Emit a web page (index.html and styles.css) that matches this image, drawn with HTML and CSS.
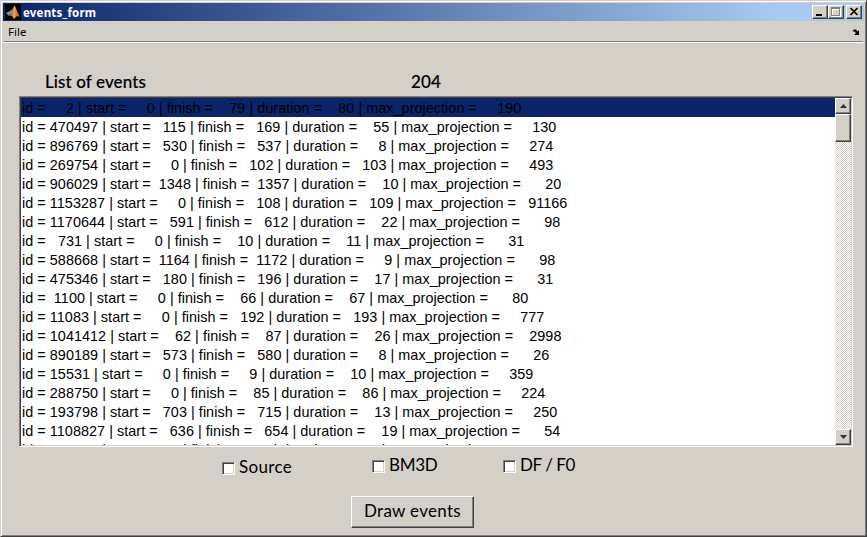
FILE: index.html
```html
<!DOCTYPE html>
<html lang="en">
<head>
<meta charset="utf-8">
<title>events_form</title>
<link rel="stylesheet" href="styles.css">
</head>
<body>
<div class="window">
<header class="titlebar">
<svg class="logo" width="16" height="16" viewBox="0 0 16 16"><defs><linearGradient id="flame" x1="0" x2="1" y1="0" y2="0"><stop offset="0" stop-color="#8e2e16"/><stop offset=".45" stop-color="#f0a060"/><stop offset="1" stop-color="#c03a12"/></linearGradient></defs><path fill="#000" d="M0 0h16v16H0z"/><path fill="#58a8b4" d="M1 9l4-2 3-3-1 5-3 3z"/><path fill="url(#flame)" d="M4 11l3-3 2-6 1 0 2 5 3 6-3-1-3 3-2-3-1 0z"/></svg>
<h1 class="title">events_form</h1>
<div class="controls">
<button class="control" aria-label="Minimize"><svg width="14" height="12" shape-rendering="crispEdges"><path d="M3 8h6v2H3z"/></svg></button><button class="control" aria-label="Maximize"><svg width="14" height="12" shape-rendering="crispEdges"><path fill="#fff" d="M3 2h9v9H3z"/><path fill="#808080" fill-rule="evenodd" d="M2 1h9v9H2zM3 3v6h7V3z"/><path fill="#d4d0c8" d="M4 4h6v5H4z"/></svg></button><button class="control close" aria-label="Close"><svg width="14" height="12"><path stroke="#000" stroke-width="1.7" d="M3.5 2l7 7M10.5 2l-7 7"/></svg></button>
</div>
</header>
<nav class="menubar"><span>File</span><svg width="8" height="8" viewBox="0 0 8 8"><path d="M7 2v5H2l2-2-1.500-1.500H1L.5 3 2 1.500h2L5.500 3.500z"/></svg></nav>
<main class="content">
<div class="heading"><span class="list-label">List of events</span><span class="count">204</span></div>
<div class="listbox">
<div class="rows">
<div class="row selected"><span>id =     2 | start =     0 | finish =    79 | duration =    80 | max_projection =     190</span></div>
<div class="row"><span>id = 470497 | start =   115 | finish =   169 | duration =    55 | max_projection =     130</span></div>
<div class="row"><span>id = 896769 | start =   530 | finish =   537 | duration =     8 | max_projection =     274</span></div>
<div class="row"><span>id = 269754 | start =     0 | finish =   102 | duration =   103 | max_projection =     493</span></div>
<div class="row"><span>id = 906029 | start =  1348 | finish =  1357 | duration =    10 | max_projection =      20</span></div>
<div class="row"><span>id = 1153287 | start =     0 | finish =   108 | duration =   109 | max_projection =   91166</span></div>
<div class="row"><span>id = 1170644 | start =   591 | finish =   612 | duration =    22 | max_projection =      98</span></div>
<div class="row"><span>id =   731 | start =     0 | finish =    10 | duration =    11 | max_projection =      31</span></div>
<div class="row"><span>id = 588668 | start =  1164 | finish =  1172 | duration =     9 | max_projection =      98</span></div>
<div class="row"><span>id = 475346 | start =   180 | finish =   196 | duration =    17 | max_projection =      31</span></div>
<div class="row"><span>id =  1100 | start =     0 | finish =    66 | duration =    67 | max_projection =      80</span></div>
<div class="row"><span>id = 11083 | start =     0 | finish =   192 | duration =   193 | max_projection =     777</span></div>
<div class="row"><span>id = 1041412 | start =    62 | finish =    87 | duration =    26 | max_projection =    2998</span></div>
<div class="row"><span>id = 890189 | start =   573 | finish =   580 | duration =     8 | max_projection =      26</span></div>
<div class="row"><span>id = 15531 | start =     0 | finish =     9 | duration =    10 | max_projection =     359</span></div>
<div class="row"><span>id = 288750 | start =     0 | finish =    85 | duration =    86 | max_projection =     224</span></div>
<div class="row"><span>id = 193798 | start =   703 | finish =   715 | duration =    13 | max_projection =     250</span></div>
<div class="row"><span>id = 1108827 | start =   636 | finish =   654 | duration =    19 | max_projection =      54</span></div>
<div class="row"><span>id = 298768 | start =     9 | finish =    19 | duration =    11 | max_projection =      47</span></div>
</div>
<div class="scrollbar"><button class="arrow" aria-label="Scroll up"><svg width="7" height="4"><path fill="#333" d="M3.5 0L7 4H0z"/></svg></button><div class="thumb"></div><div class="track"></div><button class="arrow" aria-label="Scroll down"><svg width="7" height="4"><path fill="#333" d="M3.5 4L0 0h7z"/></svg></button></div>
</div>
<div class="options">
<label class="option source"><input type="checkbox"><span>Source</span></label>
<label class="option bm3d"><input type="checkbox"><span>BM3D</span></label>
<label class="option df"><input type="checkbox"><span>DF / F0</span></label>
</div>
<button class="draw"><span>Draw events</span></button>
</main>
</div>
</body>
</html>
```
FILE: styles.css
```css
* { box-sizing: border-box; }
body { margin: 0; background: #d4d0c8; color: #000; overflow: hidden; }
button { padding: 0; margin: 0; background: #d4d0c8; border: 1px solid; border-color: #fff #404040 #404040 #fff; border-radius: 0; color: #000; }
svg { display: block; }
.window { width: 867px; height: 537px; display: flex; flex-direction: column; padding: 1px 1px 0 1px; border: 1px solid; border-color: #d4d0c8 #404040 #404040 #d4d0c8; box-shadow: inset 1px 1px #fff, inset -1px -1px #808080; }
.titlebar { height: 18px; margin: 1px 1px 0 1px; display: flex; align-items: center; background: linear-gradient(90deg, #0a246a, #a6caf0 90%); flex: none; }
.logo { margin-left: 2px; }
.title { flex: 1; height: 18px; margin: 0 0 0 2px; font: bold 11.5px/19px "Noto Sans", sans-serif; letter-spacing: .2px; color: #fff; }
.controls { display: flex; margin-right: 2px; }
.control { width: 16px; height: 14px; box-shadow: inset -1px -1px #808080; overflow: hidden; }
.close { margin-left: 2px; }
.menubar { height: 21px; margin: 0 2px; padding: 1px 3px 0 4px; display: flex; align-items: center; justify-content: space-between; border-bottom: 1px solid #808080; box-shadow: 0 1px #fff; font: 11.5px/19px "Noto Sans", sans-serif; flex: none; }
.content { flex: 1; display: flex; flex-direction: column; padding: 0 12px 0 17px; min-height: 0; }
.heading { height: 54px; padding: 28px 0 0 26px; display: flex; font: 500 17px/24px Lato, sans-serif; flex: none; }
.list-label { width: 366px; letter-spacing: .1px; -webkit-text-stroke: .15px #000; }
.count { letter-spacing: .1px; -webkit-text-stroke: .15px #000; }
.listbox { height: 351px; display: flex; background: #fff; border: 1px solid; border-color: #808080 #fff #fff #808080; box-shadow: inset 1px 1px #404040, inset -1px -1px #d4d0c8; padding: 1px; flex: none; overflow: hidden; }
.rows { flex: 1; overflow: hidden; font: 14.4px/21px "Liberation Sans", Arial, sans-serif; letter-spacing: .045px; }
.row { height: 19px; padding-left: 1px; white-space: pre; }
.selected { background: #0a246a; }
.scrollbar { width: 16px; display: flex; flex-direction: column; flex: none; }
.arrow, .thumb { border: 1px solid; border-color: #fff #404040 #404040 #fff; box-shadow: inset -1px -1px #808080; background: #d4d0c8; flex: none; }
.arrow { height: 16px; display: grid; place-items: center; }
.thumb { height: 28px; }
.track { flex: 1; background: repeating-conic-gradient(#d4d0c8 0 25%, #fff 0 50%) 0 0 / 2px 2px; }
.options { height: 49px; display: flex; padding: 6px 0 0 203px; font: 17px/24px Lato, sans-serif; flex: none; }
.option { display: flex; height: 24px; align-items: center; }
.option input { appearance: none; margin: 2px 4px 0 0; width: 13px; height: 13px; background: #fff; border: 1px solid; border-color: #808080 #fff #fff #808080; box-shadow: inset 1px 1px #404040, inset -1px -1px #d4d0c8; }
.source { width: 150px; margin-top: 2px; letter-spacing: .35px; }
.bm3d { width: 131px; letter-spacing: -.3px; }
.df { letter-spacing: -.45px; }
.draw { width: 123px; height: 32px; margin-left: 332px; padding-bottom: 3px; box-shadow: inset -1px -1px #808080; font: 17px/26px Lato, sans-serif; letter-spacing: .3px; flex: none; }
```
